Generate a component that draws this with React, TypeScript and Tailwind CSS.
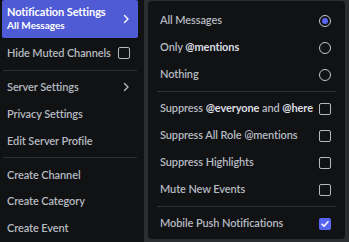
import React from "react";

const font = { fontFamily: 'Lato, "Open Sans", sans-serif' };

function Chevron({ color = "#b5bac1" }: { color?: string }) {
  return (
    <svg width="8" height="10" viewBox="0 0 8 10" className="shrink-0">
      <polyline points="2.5,1.5 6,5 2.5,8.5" fill="none" stroke={color} strokeWidth="1.4" strokeLinecap="round" strokeLinejoin="round" />
    </svg>
  );
}

function Box({ checked = false }: { checked?: boolean }) {
  if (checked) {
    return (
      <div className="w-[12px] h-[12px] rounded-[2px] bg-[#5865f2] flex items-center justify-center shrink-0">
        <svg width="10" height="10" viewBox="0 0 10 10">
          <polyline points="2,5.3 4,7.2 8,2.8" fill="none" stroke="#ffffff" strokeWidth="1.5" strokeLinecap="round" strokeLinejoin="round" />
        </svg>
      </div>
    );
  }
  return <div className="w-[12px] h-[12px] rounded-[2px] border-[1.5px] border-[#b5bac1] shrink-0" />;
}

function Radio({ checked = false }: { checked?: boolean }) {
  return (
    <div className="w-[12px] h-[12px] rounded-full border-[1.5px] border-[#c4c7cc] flex items-center justify-center shrink-0">
      {checked && <div className="w-[6px] h-[6px] rounded-full bg-[#5865f2]" />}
    </div>
  );
}

function LRow({ label, right }: { label: string; right?: React.ReactNode }) {
  return (
    <div className="h-[27px] flex items-center justify-between pl-[5px] pr-[8px] text-[11px] tracking-[-0.1px] font-semibold text-[#b5bac1] whitespace-nowrap">
      <span>{label}</span>
      {right}
    </div>
  );
}

function RRow({ children, right }: { children: React.ReactNode; right: React.ReactNode }) {
  return (
    <div className="h-[27px] flex items-center justify-between pl-[6px] pr-[8px] text-[11px] tracking-[-0.1px] font-semibold text-[#b5bac1] whitespace-nowrap">
      <span>{children}</span>
      {right}
    </div>
  );
}

function LSep() {
  return (
    <div className="h-[7px] flex items-center px-[1px]">
      <div className="h-px w-full bg-[#2e3035]" />
    </div>
  );
}

function RSep() {
  return (
    <div className="h-[7px] flex items-center px-[3px]">
      <div className="h-px w-full bg-[#2e3035]" />
    </div>
  );
}

export default function App() {
  return (
    <div className="w-[349px] h-[242px] bg-[#2b2d31] flex overflow-hidden" style={font}>
      <div className="w-[144px] h-full bg-[#111214] pl-[2px] pr-[6px] flex flex-col">
        <div className="h-[38px] rounded-[2px] bg-[#4f5bd5] flex items-center justify-between pl-[5px] pr-[8px] whitespace-nowrap">
          <div className="flex flex-col leading-none">
            <span className="text-[11px] tracking-[-0.1px] font-bold text-white leading-[14px]">Notification Settings</span>
            <span className="text-[10px] font-bold text-white leading-[13px]">All Messages</span>
          </div>
          <Chevron color="#ffffff" />
        </div>
        <div className="h-[2px]" />
        <LRow label="Hide Muted Channels" right={<Box />} />
        <LSep />
        <LRow label="Server Settings" right={<Chevron />} />
        <LRow label="Privacy Settings" />
        <LRow label="Edit Server Profile" />
        <LSep />
        <LRow label="Create Channel" />
        <LRow label="Create Category" />
        <LRow label="Create Event" />
      </div>
      <div className="w-[4px]" />
      <div className="w-[197px] h-[238px] mt-[1px] bg-[#111214] rounded-[4px] pt-[6px] px-[6px] flex flex-col">
        <RRow right={<Radio checked />}>All Messages</RRow>
        <RRow right={<Radio />}>
          Only <span className="font-bold text-[#dbdee1]">@mentions</span>
        </RRow>
        <RRow right={<Radio />}>Nothing</RRow>
        <RSep />
        <RRow right={<Box />}>
          Suppress <span className="font-bold text-[#dbdee1]">@everyone</span> and{" "}
          <span className="font-bold text-[#dbdee1]">@here</span>
        </RRow>
        <RRow right={<Box />}>Suppress All Role @mentions</RRow>
        <RRow right={<Box />}>Suppress Highlights</RRow>
        <RRow right={<Box />}>Mute New Events</RRow>
        <RSep />
        <RRow right={<Box checked />}>Mobile Push Notifications</RRow>
      </div>
    </div>
  );
}
